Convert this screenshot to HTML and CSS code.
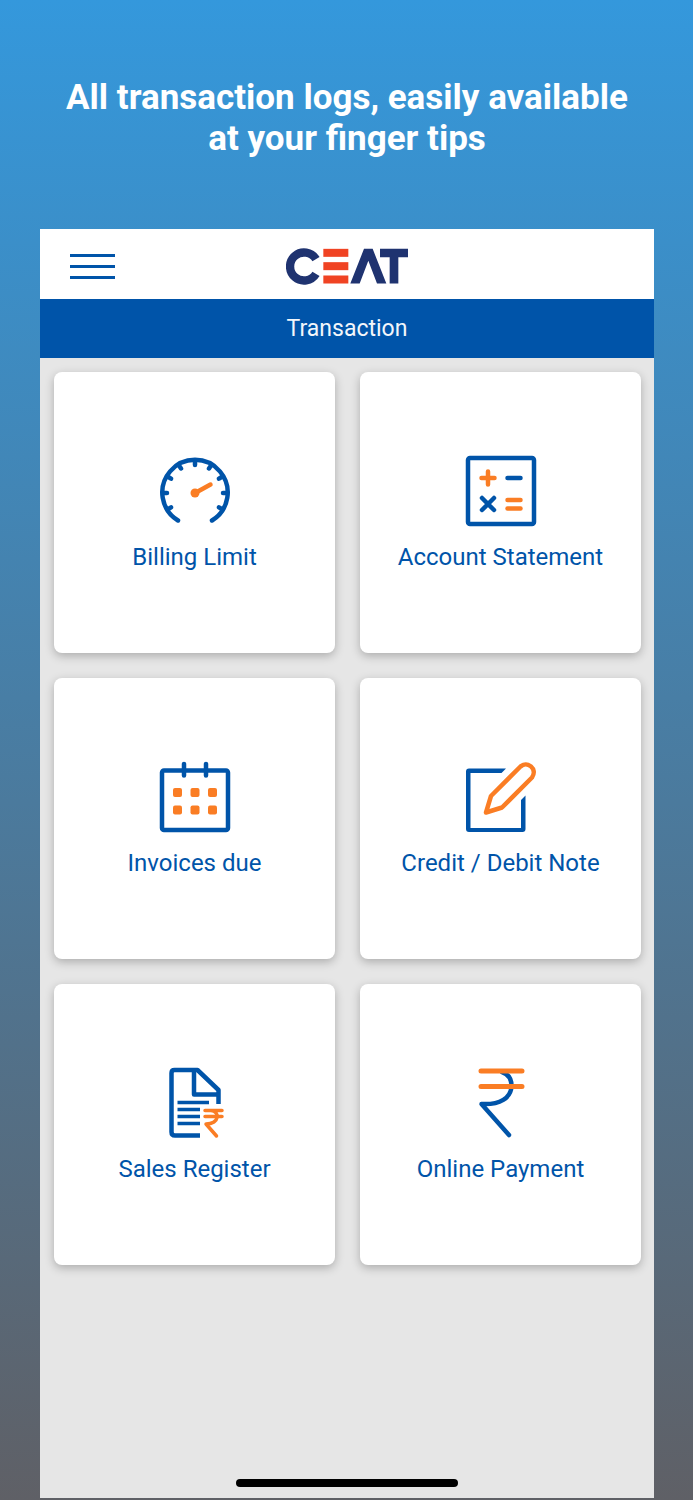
FILE: index.html
```
<!DOCTYPE html>
<html lang="en">
<head>
  <meta charset="utf-8">
  <meta name="viewport" content="width=device-width, initial-scale=1">
  <title>Transaction</title>
  <link rel="stylesheet" href="styles.css">
</head>
<body>
  <h1 class="headline">All transaction logs, easily available<br>at your finger tips</h1>

  <div class="phone">
    <header class="topbar">
      <button class="menu-button" type="button" aria-label="Menu">
        <span class="menu-line"></span>
        <span class="menu-line"></span>
        <span class="menu-line"></span>
      </button>
      <svg class="logo" viewBox="0 0 366 110" role="img" aria-label="CEAT">
        <path d="M90 33A42 42 0 1 0 90 77" fill="none" stroke="#1f3370" stroke-width="25"/>
        <g fill="#f04323">
          <rect x="112" y="2" width="75" height="24"/>
          <rect x="112" y="42" width="75" height="24"/>
          <rect x="112" y="82" width="75" height="24"/>
        </g>
        <g fill="#1f3370">
          <path d="M193 106L234 2H260L301 106H273L247 38L221 106Z"/>
          <path d="M282 2H366V27H337V106H311V27H282Z"/>
        </g>
      </svg>
    </header>

    <h2 class="page-title">Transaction</h2>

    <main class="card-grid">
      <a href="#" class="card">
        <svg class="icon" viewBox="0 0 72 72">
          <path d="M19 65.5A32.7 32.7 0 1 1 53 65.5"/>
          <path d="M36 6V10M20 10.5L22 13.5M52 10.5L50 13.5M8.5 21.5L12 23.7M63.5 21.5L60 23.7M4 38H8M68 38H64M8.5 54.5L12 52.3M63.5 54.5L60 52.3"/>
          <path class="accent" d="M37 37.5L51.5 29.5"/>
          <circle class="accent-fill" cx="36" cy="38" r="4.5"/>
        </svg>
        <span class="card-label">Billing Limit</span>
      </a>

      <a href="#" class="card">
        <svg class="icon" viewBox="0 0 72 72">
          <rect x="3" y="3" width="66" height="66" rx="2"/>
          <path class="accent" d="M16.5 23H29.5M23 16.5V29.5"/>
          <path d="M42.5 23H55.5"/>
          <path d="M17 43L29 55M29 43L17 55"/>
          <path class="accent" d="M42.5 45H55.5M42.5 53.5H55.5"/>
        </svg>
        <span class="card-label">Account Statement</span>
      </a>

      <a href="#" class="card">
        <svg class="icon" viewBox="0 0 72 72">
          <rect x="3" y="9.5" width="66" height="59.5" rx="2"/>
          <path d="M25 3V14.5M47 3V14.5"/>
          <g class="accent-fill">
            <rect x="14" y="27" width="9" height="9" rx="2"/>
            <rect x="31.5" y="27" width="9" height="9" rx="2"/>
            <rect x="49" y="27" width="9" height="9" rx="2"/>
            <rect x="14" y="44.5" width="9" height="9" rx="2"/>
            <rect x="31.5" y="44.5" width="9" height="9" rx="2"/>
            <rect x="49" y="44.5" width="9" height="9" rx="2"/>
          </g>
        </svg>
        <span class="card-label">Invoices due</span>
      </a>

      <a href="#" class="card">
        <svg class="icon" viewBox="0 0 72 72">
          <path class="solid" d="M41 7.5H4Q1 7.5 1 10.5V68Q1 71 4 71H57.5Q60.5 71 60.5 68V34.5L56 39V67H5.500V12H36.500Z"/>
          <path class="accent" d="M21 51.5L26 35L55.5 5.5C62 -0.5 73 7.5 67 16.5L37 46.5Z"/>
        </svg>
        <span class="card-label">Credit / Debit Note</span>
      </a>

      <a href="#" class="card">
        <svg class="icon" viewBox="0 0 72 72">
          <g class="square">
            <path d="M41 68.500H16Q12.500 68.500 12.500 65V6Q12.500 3 15.500 3H38.500L59.500 23V37"/>
            <path d="M35 3V27.5H59.5"/>
            <path class="thin" d="M18.5 35.5H50M18.5 42.5H41M18.5 49.5H41M18.5 56.5H41"/>
          </g>
          <path class="accent thin" d="M46 43.5H63M46 49.5H63M52 43.5C61 44 61 57 47 57L57.5 69"/>
        </svg>
        <span class="card-label">Sales Register</span>
      </a>

      <a href="#" class="card">
        <svg class="icon" viewBox="0 0 72 72">
          <path d="M37 5C43 7 46.5 12 46.5 19C46 31 35 38 16.500 37L44 68"/>
          <path class="accent wide" d="M16 4H57M16 19.5H57"/>
        </svg>
        <span class="card-label">Online Payment</span>
      </a>
    </main>

    <div class="home-indicator"></div>
  </div>
</body>
</html>
```
FILE: styles.css
```
* {
  box-sizing: border-box;
}
body {
  font-family: Roboto, 'Open Sans', sans-serif;
  margin: 0;
  padding: 0 39px 2px 40px;
  min-height: 100vh;
  background: linear-gradient(180deg, #3498dc 0%, #5f6066 100%);
  display: flex;
  flex-direction: column;
}
.headline {
  margin: 0;
  padding: 77px 0 70px;
  color: white;
  font-size: 35px;
  line-height: 41px;
  font-weight: 700;
  text-align: center;
}
.phone {
  flex: 1;
  display: flex;
  flex-direction: column;
  background: #e6e6e6;
}
.topbar {
  display: grid;
  grid-template-columns: 1fr auto 1fr;
  align-items: center;
  height: 70px;
  padding: 4px 30px 0;
  background: white;
}
.menu-button {
  display: flex;
  flex-direction: column;
  gap: 8px;
  width: 45px;
  padding: 0;
  border: none;
  background: none;
  cursor: pointer;
}
.menu-line {
  height: 3px;
  width: 100%;
  background: #0054a9;
}
.logo {
  width: 122px;
  height: 37px;
}
.page-title {
  margin: 0;
  background: #0054a9;
  color: #f2f6fb;
  font-size: 23px;
  line-height: 59px;
  font-weight: 400;
  text-align: center;
}
.card-grid {
  display: grid;
  grid-template-columns: 1fr 1fr;
  gap: 25px;
  padding: 14px 13px 14px 14px;
}
.card {
  aspect-ratio: 1;
  display: flex;
  flex-direction: column;
  align-items: center;
  justify-content: center;
  gap: 15px;
  padding-top: 2px;
  border-radius: 8px;
  background: white;
  box-shadow: 0 3px 10px rgba(0, 0, 0, 0.25);
  color: #0054a9;
  text-decoration: none;
}
.card-label {
  font-size: 24px;
  line-height: 30px;
}
.icon {
  width: 72px;
  height: 72px;
  fill: none;
  stroke: #0054a9;
  stroke-width: 4.5;
  stroke-linecap: round;
  stroke-linejoin: round;
}
.icon .accent {
  stroke: #fa7d24;
}
.icon .accent-fill {
  fill: #fa7d24;
  stroke: none;
}
.icon .solid {
  fill: #0054a9;
  stroke: none;
}
.icon .square {
  stroke-linecap: butt;
}
.icon .thin {
  stroke-width: 3.5;
}
.icon .wide {
  stroke-width: 5;
}
.home-indicator {
  width: 36%;
  height: 8px;
  margin: auto auto 11px;
  border-radius: 4px;
  background: black;
}
```
